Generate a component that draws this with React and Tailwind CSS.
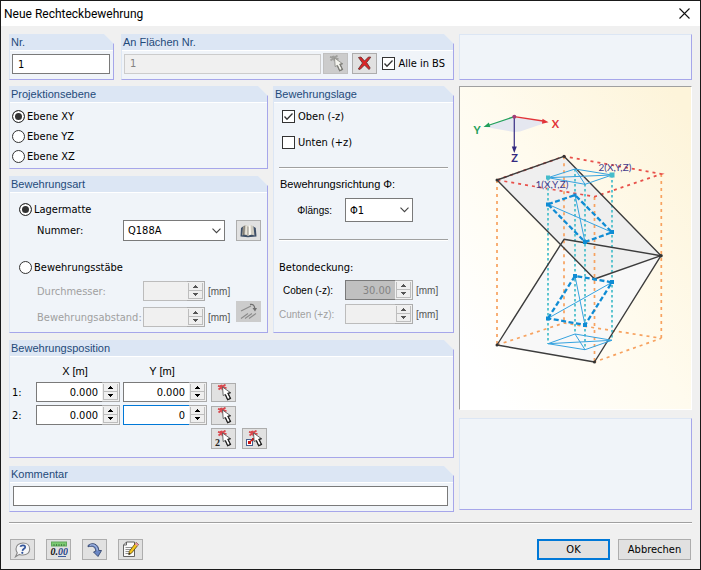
import React, { useState } from 'react';

const Group = ({ title, className = '', children }) => (
  <section
    className={`flex flex-col border-b border-l border-r border-b-[#a6a6ea] border-l-[#dce6f4] border-r-[#a6a6ea] bg-[#f0f4f9] [clip-path:polygon(0_0,calc(100%-10px)_0,100%_10px,100%_100%,0_100%)] ${className}`}
  >
    <h2 className="h-[17px] border-b border-white bg-[#dce6f4] pl-px font-['Liberation_Sans',sans-serif] text-[11px] leading-4 text-[#1f4a7a]">
      {title}
    </h2>
    {children}
  </section>
);

const Panel = ({ className = '' }) => (
  <div
    className={`border border-b-[#a6a6ea] border-l-[#dce6f4] border-r-[#a6a6ea] border-t-[#dce6f4] bg-[#f0f4f9] ${className}`}
  />
);

const Divider = () => <hr className="border-t border-b border-t-[#a0a0a0] border-b-white" />;

const Unit = () => (
  <span className="ml-[3px] font-['Liberation_Sans',sans-serif] text-[10px] text-[#555]">[mm]</span>
);

const Radio = ({ name, label, checked, onChange }) => (
  <label className="flex h-[13px] items-center gap-[2px]">
    <input
      type="radio"
      name={name}
      checked={checked}
      onChange={onChange}
      className="h-[13px] w-[13px] appearance-none rounded-full border border-[#333] bg-white checked:bg-[#333] checked:shadow-[inset_0_0_0_2px_white]"
    />
    {label}
  </label>
);

const Checkbox = ({ label, defaultChecked }) => (
  <label className="flex h-[13px] items-center gap-[3px] whitespace-nowrap">
    <span className="relative h-[13px] w-[13px]">
      <input
        type="checkbox"
        defaultChecked={defaultChecked}
        className="peer block h-[13px] w-[13px] appearance-none border border-[#333] bg-white"
      />
      <svg
        viewBox="0 0 13 13"
        className="pointer-events-none absolute inset-0 hidden h-[13px] w-[13px] peer-checked:block"
      >
        <path d="M2.5 6.5 L5 9.2 L10.5 3.5" fill="none" stroke="#333" strokeWidth="1.3" />
      </svg>
    </span>
    {label}
  </label>
);

const Arrow = ({ down, disabled }) => (
  <svg viewBox="0 0 5 3" className="h-[3px] w-[5px]" shapeRendering="crispEdges">
    <path d={down ? 'M0 0 H5 L2.5 3 Z' : 'M0 3 H5 L2.5 0 Z'} fill={disabled ? '#555' : '#000'} />
  </svg>
);

const Spinner = ({ id, label, value = '', disabled, filled, active, className = '' }) => {
  let frame = 'border-[#7a7a7a] bg-white';
  if (active) frame = 'border-[#0078d7] bg-white';
  if (disabled) frame = 'border-[#bcbcbc] bg-[#f0f0f0] text-[#838383]';
  if (filled) frame = 'border-[#7a7a7a] bg-[#c0c0c0] text-[#838383]';

  return (
    <div className={`flex h-5 ${className}`}>
      <input
        id={id}
        aria-label={label}
        type="text"
        defaultValue={value}
        disabled={disabled}
        className={`min-w-0 flex-1 border border-r-0 pr-1 text-right ${frame}`}
      />
      <span className="flex w-[18px] flex-col border border-l-0 border-[#acacac] bg-[#f0f0f0] p-px">
        <button
          type="button"
          aria-label="Erhöhen"
          disabled={disabled}
          className="flex flex-1 items-center justify-center border border-t-0 border-[#bdbdbd] bg-[#efefef]"
        >
          <Arrow disabled={disabled} />
        </button>
        <button
          type="button"
          aria-label="Verringern"
          disabled={disabled}
          className="flex flex-1 items-center justify-center border border-t-0 border-[#bdbdbd] bg-[#efefef]"
        >
          <Arrow down disabled={disabled} />
        </button>
      </span>
    </div>
  );
};

const Select = ({ id, options, className = '' }) => (
  <div className={`relative ${className}`}>
    <select id={id} className="h-full w-full appearance-none border border-[#7a7a7a] bg-white pl-1">
      {options.map((option) => (
        <option key={option}>{option}</option>
      ))}
    </select>
    <svg viewBox="0 0 9 6" className="pointer-events-none absolute right-1 top-1/2 h-[6px] w-[9px] -translate-y-1/2">
      <path d="M0.5 0.7 L4.5 4.7 L8.5 0.7" fill="none" stroke="#444" strokeWidth="1.1" />
    </svg>
  </div>
);

const IconButton = ({ label, disabled, className = 'h-[21px] border-[#adadad] bg-[#e1e1e1]', children }) => (
  <button
    type="button"
    aria-label={label}
    disabled={disabled}
    className={`flex w-[25px] shrink-0 items-center justify-center border ${className}`}
  >
    {children}
  </button>
);

const PickIcon = ({ gray, two, box }) => (
  <svg viewBox="0 0 20 17" className="h-[17px] w-5">
    <path
      d="M4 1.8 L12.5 4.2 M4.5 5.6 L11.5 0.6 M7.2 0.8 L8.6 6"
      stroke={gray ? '#9f9f9c' : '#d9484e'}
      strokeWidth="1.9"
      fill="none"
    />
    {two && (
      <text x="1" y="15.5" fontSize="10" fontWeight="bold" fill="#222" className="font-['Liberation_Serif',serif]">
        2
      </text>
    )}
    {box && (
      <>
        <rect x="1.5" y="9.5" width="6" height="6" fill="#fff" stroke="#46608e" />
        <path d="M4 12.5 L9 8.5" stroke="#cc1414" strokeWidth="1.5" />
        <rect x="3" y="11" width="3" height="3" fill="#cc1414" />
        <rect x="7" y="8" width="2.5" height="2.5" fill="#cc1414" />
      </>
    )}
    <path
      d="M8.5 3 L9.2 11.6 L11.3 10.5 L13.6 15.8 L16.4 14.4 L14 9.3 L16.4 8.6 Z"
      fill={gray ? '#f4f4ee' : '#fff'}
      stroke={gray ? '#90908b' : '#5a5a5a'}
      strokeWidth="0.9"
    />
    <path
      d="M11.3 10.5 L13.7 15.8 L16.5 14.4 L14 9.3 L16.6 8.6"
      fill="none"
      stroke={gray ? '#7b7b76' : '#222'}
      strokeWidth="1.2"
    />
  </svg>
);

const DeleteIcon = () => (
  <svg viewBox="0 0 15 15" className="h-[15px] w-[15px]">
    <path
      d="M1.5 1.5 L4 1 L7.5 5 L11.5 1 L13.8 1.2 L9.6 6.6 L13.2 12 L12 13.5 L7.5 9 L3 13.5 L1.3 13 L5.5 7 Z"
      fill="#dc2527"
      stroke="#6d3434"
      strokeWidth="0.9"
    />
  </svg>
);

const BookIcon = () => (
  <svg viewBox="0 0 17 14" className="h-[14px] w-[17px]">
    <path d="M1 4 L0.5 12.5 L8 13.2 L16.5 12.5 L15.8 4 L13.5 2.5 L3 2.5 Z" fill="#3f5068" />
    <path d="M3 2.5 Q5.5 0 8 2.5 L8 12 Q5 10 2 11.5 Z" fill="#a9a59b" />
    <path d="M5.5 1.2 Q7 1 8 2.5 L8 12 Q6.8 10.6 5 10.6 Z" fill="#e9e5da" />
    <path d="M8 2.5 Q11 0 13.5 2.8 L14.5 11.5 Q11 10 8 12 Z" fill="#cfcbc0" />
    <path d="M8 2.5 Q9 1.2 10.5 1.2 L11 10.5 Q9.5 10.6 8 12 Z" fill="#fbf9f2" />
    <path d="M8 2.5 V12 M4.3 2 L3.5 11" stroke="#6f6b63" strokeWidth="0.8" />
  </svg>
);

const BarsIcon = () => (
  <svg viewBox="0 0 20 17" className="h-[17px] w-5">
    <path
      d="M2 8 L12 3 M2 15.5 L9 10.5 M6 15.5 L13 10.5 M10 15.5 L17 10.5"
      fill="none"
      stroke="#8b8b8b"
      strokeWidth="1.1"
    />
    <path d="M11 1.5 Q15.5 0.5 15.8 6" fill="none" stroke="#6f6f6f" strokeWidth="1.3" />
    <path d="M13.5 5 L18 5 L16 8.5 Z" fill="#6f6f6f" />
  </svg>
);

const HelpIcon = () => (
  <svg viewBox="0 0 17 16" className="h-4 w-[17px]">
    <path
      d="M9 1 C13 1 15.7 3.5 15.7 7 C15.7 10.6 13 13 9 13 C7.7 13 6.5 12.8 5.5 12.4 L1.5 14.8 L3.3 10.8 C2.5 9.8 2 8.5 2 7 C2 3.5 5 1 9 1 Z"
      fill="#f5f6f8"
      stroke="#888"
      strokeWidth="1.1"
    />
    <path d="M6.3 4.8 C7 2.8 11.3 2.7 11.2 5.1 C11.1 6.8 8.7 6.8 8.5 8.8" fill="none" stroke="#34569b" strokeWidth="1.7" />
    <circle cx="8.3" cy="10.8" r="1.1" fill="#34569b" />
  </svg>
);

const UnitsIcon = () => (
  <svg viewBox="0 0 18 17" className="h-[17px] w-[18px]">
    <rect x="1.5" y="1" width="15" height="4" fill="#7ccb72" stroke="#63a85c" />
    <path d="M4 3 V5 M6.5 3 V5 M9 3 V5 M11.5 3 V5 M14 3 V5" stroke="#38723a" strokeWidth="0.8" />
    <path d="M8 15.5 H16" stroke="#3c5a9c" />
    <text
      x="0.5"
      y="13.5"
      fontSize="10"
      fontWeight="bold"
      fontStyle="italic"
      fill="#111"
      className="font-['Liberation_Serif',serif]"
    >
      0.<tspan fill="#2a4589">00</tspan>
    </text>
  </svg>
);

const RedoIcon = () => (
  <svg viewBox="0 0 17 16" className="h-4 w-[17px]">
    <path
      d="M2 3.5 C6 0 12.5 1.5 12.8 8.5 L15.5 8.5 L12 14.5 L7.5 10 L9.8 9.2 C9.6 5 6.5 3.2 2 4.8 Z"
      fill="#6a86c4"
      stroke="#34466d"
      strokeWidth="0.9"
    />
    <path d="M4 3.3 C8 1.8 11 4 11.3 8.5" fill="none" stroke="#b4c5e8" strokeWidth="1" />
  </svg>
);

const NoteIcon = () => (
  <svg viewBox="0 0 18 17" className="h-[17px] w-[18px]">
    <path d="M4.5 1 H12.5 V15.5 H1.5 V4 Z" fill="#fafafa" stroke="#555" strokeWidth="0.9" />
    <path d="M1.5 4 H4.5 V1" fill="none" stroke="#555" strokeWidth="0.9" />
    <path d="M3.5 6.5 H10 M3.5 8.5 H9 M3.5 10.5 H7 M3.5 12.5 H7" stroke="#777" strokeWidth="0.8" />
    <path d="M14 1.5 L16.5 3.5 L9.5 12.2 L6.8 13.6 L7.3 10.3 Z" fill="#f4c51d" stroke="#574512" strokeWidth="0.8" />
    <path d="M14 1.5 L16.5 3.5 L15.3 5 L12.8 3 Z" fill="#e58fb0" />
    <path d="M6.6 13.8 L7 11.8 L8.6 13 Z" fill="#222" />
  </svg>
);

const verticals = [
  [88, 91, 257],
  [115, 82, 247],
  [125, 97, 263],
  [152, 88, 253]
];

const Diagram = () => (
  <svg viewBox="0 0 231 322" className="block w-full" role="img" aria-label="Bewehrungsposition im Raum">
    <defs>
      <linearGradient id="paper" x1="0.1" y1="0.9" x2="1" y2="0.1">
        <stop offset="0" stopColor="#ffffff" />
        <stop offset="0.5" stopColor="#fffbee" />
        <stop offset="1" stopColor="#fdf4da" />
      </linearGradient>
    </defs>
    <rect width="231" height="322" fill="url(#paper)" />

    {/* axes */}
    <path d="M54.3 29.7 L88 35 L60 44.5 L54 45 L24 39.7 Z" fill="#e5e7f0" />
    <path d="M54.3 29.7 L83 34" stroke="#e23338" strokeWidth="1.3" />
    <path d="M88.5 35.2 L82 36.8 L82.5 31.8 Z" fill="#e23338" />
    <path d="M54.3 29.7 L28 38.5" stroke="#21a05a" strokeWidth="1.3" />
    <path d="M23.5 40 L28.8 35.5 L30.3 40 Z" fill="#21a05a" />
    <path d="M54.3 29.7 V60" stroke="#453b8c" strokeWidth="1.3" />
    <path d="M54.3 66 L51.8 59.5 H56.8 Z" fill="#342a80" />
    <circle cx="54.3" cy="29.7" r="2" fill="#a03c78" />
    <g fontSize="11" fontWeight="bold" textAnchor="middle" className="font-[Lato,sans-serif]">
      <text x="95.5" y="40.5" fill="#e23338">X</text>
      <text x="17" y="46.5" fill="#21a05a">Y</text>
      <text x="54.7" y="74.5" fill="#342a80">Z</text>
    </g>

    {/* planes */}
    <path d="M37 258 L104 152.3 L201 168.7 L134.5 275 Z" fill="#f8f8f8" />
    <path d="M37 93 L104 69.3 L201 168.7 L134.5 192 Z" fill="#efefef" />

    <g fill="none" stroke="#f7a25f" strokeWidth="1.7" strokeDasharray="3 4">
      <path d="M37 93 V258" />
      <path d="M104 69.3 V236" />
      <path d="M201.3 87 V251.3" />
      <path d="M134.5 110 V275" />
      <path d="M37 258 L104 236 L201.3 251.3 L134.5 275" />
    </g>
    <g fill="none" stroke="#e8504a" strokeWidth="1.7" strokeDasharray="3 4">
      <path d="M37 93 L104 69.3 L201.3 87 L134.5 109.7 Z" />
    </g>
    <g stroke="#5fc5d0" strokeWidth="2" strokeDasharray="2.5 2.5">
      {verticals.map(([x, top, bottom]) => (
        <path key={x} d={`M${x} ${top} V${bottom}`} />
      ))}
    </g>

    <g fill="none" stroke="#3c3c3c" strokeWidth="1.4" strokeLinejoin="round">
      <path d="M37 93 L104 69.3 L201 168.7 L134.5 192 Z" />
      <path d="M37 258 L104 152.3 L201 168.7 L134.5 275 Z" />
    </g>
    <g fill="#333">
      <circle cx="37" cy="93" r="1.5" />
      <circle cx="104" cy="69.3" r="1.5" />
      <circle cx="201" cy="168.7" r="1.8" />
      <circle cx="134.5" cy="192" r="1.5" />
      <circle cx="37" cy="258" r="1.5" />
      <circle cx="134.5" cy="275" r="1.5" />
    </g>

    {/* reinforcement field and its projections */}
    <g fill="none" stroke="#36a3df" strokeWidth="1">
      <path d="M88 90.7 L115 82 L152 88 L125 97.3 Z M88 90.7 L152 88 M115 82 L125 97.3" />
      <path d="M88 117.3 L152 145.3 M115 108 L125 155" />
      <path d="M88 231.3 L152 195.3 M115 189 L125 238" />
      <path d="M88 256.7 L115 247 L152 253.3 L125 262.7 Z M88 256.7 L152 253.3 M115 247 L125 262.7" />
    </g>
    <g fill="none" stroke="#0f8cd4" strokeWidth="2.3" strokeDasharray="5 2.5">
      <path d="M88 117.3 L115 108 L152 145.3 L125 155 Z" />
      <path d="M88 231.3 L115 189 L152 195.3 L125 238 Z" />
    </g>
    <g fill="#0f8cd4">
      <rect x="86" y="115.5" width="4" height="4" />
      <rect x="113.5" y="106.5" width="3" height="3" />
      <rect x="150" y="143" width="4" height="4" />
      <rect x="123" y="153" width="4" height="4" />
      <rect x="86" y="229.5" width="4" height="4" />
      <rect x="113" y="187" width="4" height="4" />
      <rect x="150" y="193" width="4" height="4" />
      <rect x="123" y="236" width="4" height="4" />
    </g>
    <rect x="86" y="88.5" width="4" height="4" fill="#45bccb" />
    <rect x="149.5" y="85.5" width="5" height="5" fill="#45bccb" />
    <g fontSize="10" fill="#453b8c" className="font-[Lato,sans-serif]">
      <text x="75.5" y="101">1(X,Y,Z)</text>
      <text x="138.5" y="84">2(X,Y,Z)</text>
    </g>
  </svg>
);

const axisRows = [
  { nr: 1, x: '0.000', y: '0.000' },
  { nr: 2, x: '0.000', y: '0', active: true }
];

const App = () => {
  const [plane, setPlane] = useState('XY');
  const [type, setType] = useState('mat');

  return (
    <div className="flex min-h-screen flex-col border border-[#1a1a1a] bg-[#f0f0f0] font-['DejaVu_Sans_Condensed','DejaVu_Sans',sans-serif] text-[11px] leading-[13px] text-black">
      {/* Title bar */}
      <header className="flex h-[25px] items-center justify-between bg-white pl-[3px] pr-[10px]">
        <h1 className="font-[Roboto,sans-serif] text-[12px] leading-4">Neue Rechteckbewehrung</h1>
        <button type="button" aria-label="Schließen">
          <svg viewBox="0 0 11 11" className="h-[11px] w-[11px]">
            <path d="M0.5 0.5 L10.5 10.5 M10.5 0.5 L0.5 10.5" stroke="#111" strokeWidth="1.1" />
          </svg>
        </button>
      </header>

      <main className="flex gap-[5px] px-2 pt-2">
        <div className="flex flex-1 flex-col">
          <div className="mb-[6px] flex gap-[7px]">
            <Group title="Nr." className="w-[105px]">
              <div className="pb-[5px] pl-[2px] pr-[3px] pt-[3px]">
                <input
                  type="text"
                  aria-label="Nr."
                  defaultValue="1"
                  className="block h-5 w-full border border-[#7a7a7a] bg-white px-[5px]"
                />
              </div>
            </Group>
            <Group title="An Flächen Nr." className="flex-1">
              <div className="flex items-center pb-[5px] pl-[2px] pr-2 pt-[2px]">
                <input
                  type="text"
                  aria-label="An Flächen Nr."
                  defaultValue="1"
                  disabled
                  className="h-5 min-w-0 flex-1 border border-[#cccccc] bg-[#f0f0f0] px-[5px] text-[#838383]"
                />
                <div className="ml-[2px] mr-[5px] flex gap-1">
                  <IconButton label="Flächen wählen" disabled className="h-[21px] border-[#c0c0c0] bg-[#cccccc]">
                    <PickIcon gray />
                  </IconButton>
                  <IconButton label="Auswahl löschen">
                    <DeleteIcon />
                  </IconButton>
                </div>
                <Checkbox label="Alle in BS" defaultChecked />
              </div>
            </Group>
          </div>

          <div className="mb-[7px] flex gap-[5px]">
            <div className="flex flex-1 flex-col gap-[7px]">
              <Group title="Projektionsebene">
                <div className="flex flex-col gap-[7px] pb-[5px] pl-[2px] pt-[7px]">
                  {['XY', 'YZ', 'XZ'].map((axis) => (
                    <Radio
                      key={axis}
                      name="plane"
                      label={`Ebene ${axis}`}
                      checked={plane === axis}
                      onChange={() => setPlane(axis)}
                    />
                  ))}
                </div>
              </Group>

              <Group title="Bewehrungsart">
                <div className="flex flex-col pb-[5px] pl-[9px] pr-[6px] pt-[10px]">
                  <Radio name="type" label="Lagermatte" checked={type === 'mat'} onChange={() => setType('mat')} />
                  <div className="mb-5 mt-1 flex items-center pl-[18px]">
                    <label htmlFor="mat-number" className="flex-1">Nummer:</label>
                    <Select id="mat-number" options={['Q188A', 'Q257A', 'Q335A']} className="mr-[11px] h-[21px] w-[102px]" />
                    <IconButton label="Bibliothek">
                      <BookIcon />
                    </IconButton>
                  </div>
                  <Radio name="type" label="Bewehrungsstäbe" checked={type === 'bars'} onChange={() => setType('bars')} />
                  <div className="mt-[7px] flex items-end justify-between pl-[18px]">
                    <div className="flex flex-1 flex-col gap-[6px]">
                      <div className="flex items-center">
                        <label htmlFor="diameter" className="w-[106px] text-[#a0a0a0]">Durchmesser:</label>
                        <Spinner id="diameter" disabled className="w-[62px]" />
                        <Unit />
                      </div>
                      <div className="flex items-center">
                        <label htmlFor="spacing" className="w-[106px] text-[#a0a0a0]">Bewehrungsabstand:</label>
                        <Spinner id="spacing" disabled className="w-[62px]" />
                        <Unit />
                      </div>
                    </div>
                    <IconButton label="Stababstand" disabled className="mb-[5px] h-[21px] border-[#cccccc] bg-[#cccccc]">
                      <BarsIcon />
                    </IconButton>
                  </div>
                </div>
              </Group>
            </div>

            <Group title="Bewehrungslage" className="w-[181px]">
              <div className="flex flex-col px-[5px] pt-[7px]">
                <div className="mb-[18px] flex flex-col gap-[13px] pl-[3px]">
                  <Checkbox label="Oben (-z)" defaultChecked />
                  <Checkbox label="Unten (+z)" />
                </div>
                <Divider />
                <p className="mb-[7px] mt-[9px] pl-px font-['Liberation_Sans',sans-serif]">Bewehrungsrichtung Φ:</p>
                <div className="mb-[17px] flex items-center gap-[13px]">
                  <label htmlFor="direction" className="w-[53px] text-right font-['Liberation_Sans',sans-serif] text-[10px]">
                    Φlängs:
                  </label>
                  <Select id="direction" options={['Φ1', 'Φ2']} className="h-6 w-[68px]" />
                </div>
                <Divider />
                <p className="mb-[6px] mt-5">Betondeckung:</p>
                <div className="flex items-center">
                  <label htmlFor="cover-top" className="mr-3 w-[54px] whitespace-nowrap text-right font-['Liberation_Sans',sans-serif] text-[10px]">
                    Coben (-z):
                  </label>
                  <Spinner id="cover-top" value="30.00" disabled filled className="w-[68px]" />
                  <Unit />
                </div>
                <div className="mt-1 flex items-center">
                  <label htmlFor="cover-bottom" className="mr-3 w-[54px] whitespace-nowrap text-right font-['Liberation_Sans',sans-serif] text-[10px] text-[#a0a0a0]">
                    Cunten (+z):
                  </label>
                  <Spinner id="cover-bottom" disabled className="w-[68px]" />
                  <Unit />
                </div>
              </div>
            </Group>
          </div>

          <Group title="Bewehrungsposition" className="mb-2">
            <div className="flex flex-col gap-[3px] pb-2 pl-[2px] pt-2">
              <div className="mb-[1px] flex gap-[3px] pl-6 text-center font-['Liberation_Sans',sans-serif]">
                <span className="w-[78px]">X [m]</span>
                <span className="w-[90px]">Y [m]</span>
              </div>
              {axisRows.map((row) => (
                <div key={row.nr} className="flex items-center">
                  <span className="w-6">{row.nr}:</span>
                  <Spinner label={`X ${row.nr}`} value={row.x} className="mr-[3px] w-[84px]" />
                  <Spinner label={`Y ${row.nr}`} value={row.y} active={row.active} className="mr-1 w-[84px]" />
                  <IconButton label={`Punkt ${row.nr} wählen`} className="h-[19px] border-[#adadad] bg-[#e1e1e1]">
                    <PickIcon />
                  </IconButton>
                </div>
              ))}
              <div className="flex gap-[6px] pl-[199px]">
                <IconButton label="Zwei Punkte wählen">
                  <PickIcon two />
                </IconButton>
                <IconButton label="Rechteck wählen">
                  <PickIcon box />
                </IconButton>
              </div>
            </div>
          </Group>

          <Group title="Kommentar">
            <div className="pb-[5px] pl-[3px] pr-[5px] pt-[3px]">
              <input type="text" aria-label="Kommentar" className="block h-5 w-full border border-[#7a7a7a] bg-white px-1" />
            </div>
          </Group>
        </div>

        {/* Preview column */}
        <div className="flex w-[233px] shrink-0 flex-col">
          <Panel className="mb-[6px] h-[46px]" />
          <div className="mb-2 border border-b-white border-l-[#a0a0a0] border-r-white border-t-[#a0a0a0]">
            <Diagram />
          </div>
          <Panel className="mb-[2px] flex-1" />
        </div>
      </main>

      <div className="px-2 pt-[10px]">
        <Divider />
      </div>

      {/* Footer */}
      <footer className="flex items-center justify-between px-[9px] pb-2 pt-[15px]">
        <div className="flex gap-[11px]">
          <IconButton label="Hilfe">
            <HelpIcon />
          </IconButton>
          <IconButton label="Einheiten und Dezimalstellen">
            <UnitsIcon />
          </IconButton>
          <IconButton label="Übernehmen">
            <RedoIcon />
          </IconButton>
          <IconButton label="Kommentar bearbeiten">
            <NoteIcon />
          </IconButton>
        </div>
        <div className="flex gap-2">
          <button type="button" className="h-[21px] w-[73px] border-2 border-[#0078d7] bg-[#e1e1e1]">
            OK
          </button>
          <button type="button" className="h-[21px] w-[73px] border border-[#adadad] bg-[#e1e1e1]">
            Abbrechen
          </button>
        </div>
      </footer>
    </div>
  );
};

export default App;
